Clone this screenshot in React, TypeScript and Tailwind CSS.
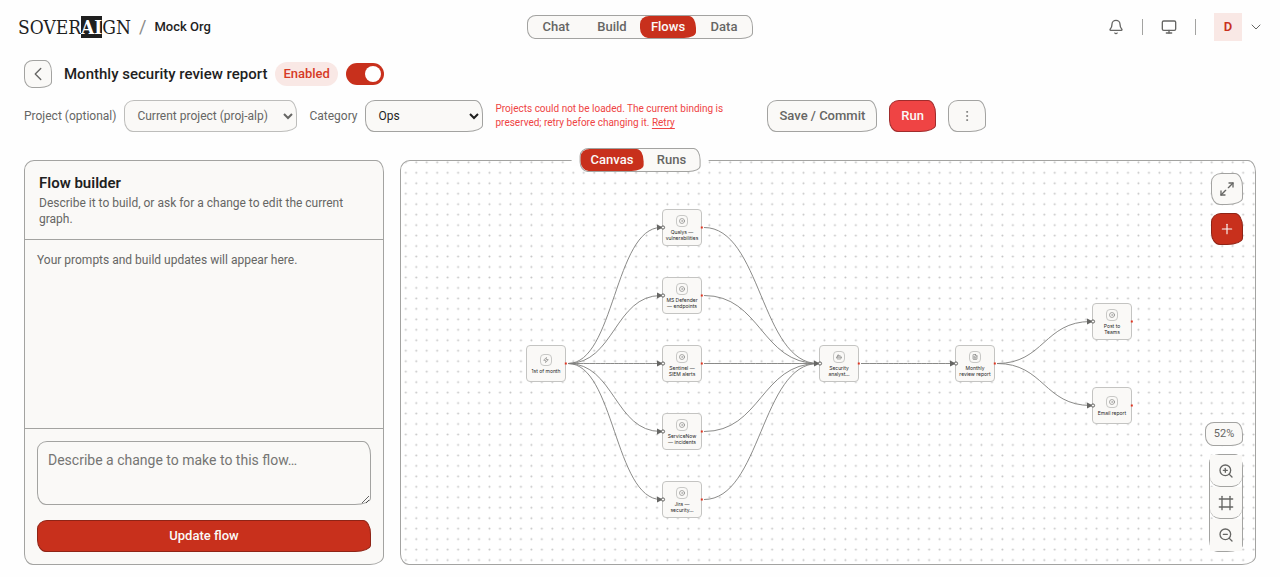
import { useState } from 'react';
import {
  Bell,
  Bot,
  ChevronDown,
  ChevronLeft,
  CircleDot,
  EllipsisVertical,
  FileText,
  Frame,
  Maximize2,
  Monitor,
  Plus,
  Zap,
  ZoomIn,
  ZoomOut,
} from 'lucide-react';
import type { LucideIcon } from 'lucide-react';
import clsx from 'clsx';

const WOBBLE = 'rounded-[10px_8px_16px_9px/9px_14px_7px_12px]';
const WOBBLE_SM = 'rounded-[9px_7px_12px_8px/8px_12px_6px_10px]';
const PANEL = 'rounded-[10px_8px_14px_9px/10px_12px_9px_11px]';

const NODE_W = 40;
const NODE_H = 37;

type FlowNode = { id: string; x: number; y: number; icon: LucideIcon; lines: string[] };

const nodes: FlowNode[] = [
  { id: 'start', x: 2, y: 138, icon: Zap, lines: ['1st of month'] },
  { id: 'qualys', x: 138, y: 2, icon: CircleDot, lines: ['Qualys —', 'vulnerabilities'] },
  { id: 'defender', x: 138, y: 70, icon: CircleDot, lines: ['MS Defender', '— endpoints'] },
  { id: 'sentinel', x: 138, y: 138, icon: CircleDot, lines: ['Sentinel —', 'SIEM alerts'] },
  { id: 'servicenow', x: 138, y: 206, icon: CircleDot, lines: ['ServiceNow', '— incidents'] },
  { id: 'jira', x: 138, y: 274, icon: CircleDot, lines: ['Jira —', 'security…'] },
  { id: 'analyst', x: 295, y: 138, icon: Bot, lines: ['Security', 'analyst…'] },
  { id: 'report', x: 431, y: 138, icon: FileText, lines: ['Monthly', 'review report'] },
  { id: 'teams', x: 568, y: 96, icon: CircleDot, lines: ['Post to', 'Teams'] },
  { id: 'email', x: 568, y: 180, icon: CircleDot, lines: ['Email report'] },
];

const edges: [string, string][] = [
  ['start', 'qualys'],
  ['start', 'defender'],
  ['start', 'sentinel'],
  ['start', 'servicenow'],
  ['start', 'jira'],
  ['qualys', 'analyst'],
  ['defender', 'analyst'],
  ['sentinel', 'analyst'],
  ['servicenow', 'analyst'],
  ['jira', 'analyst'],
  ['analyst', 'report'],
  ['report', 'teams'],
  ['report', 'email'],
];

const byId = Object.fromEntries(nodes.map((n) => [n.id, n]));

function edgePath([from, to]: [string, string]) {
  const sx = byId[from].x + NODE_W + 2;
  const sy = byId[from].y + NODE_H / 2;
  const tx = byId[to].x - 1;
  const ty = byId[to].y + NODE_H / 2;
  const mx = (sx + tx) / 2;
  return `M${sx} ${sy}C${mx} ${sy} ${mx} ${ty} ${tx} ${ty}`;
}

function Segmented({ label, items, active, onChange, itemClass }: {
  label: string;
  items: string[];
  active: string;
  onChange: (v: string) => void;
  itemClass: string;
}) {
  return (
    <nav aria-label={label} className={clsx('flex h-6 border border-[#a3a3a1] bg-[#faf9f7]', WOBBLE_SM)}>
      {items.map((item) => (
        <button
          key={item}
          type="button"
          onClick={() => onChange(item)}
          className={clsx(
            'flex items-center justify-center text-[13px] leading-4 font-medium',
            WOBBLE_SM,
            itemClass,
            item === active ? 'bg-[#c8301c] text-[#faf9f7]' : 'text-[#666664]',
          )}
        >
          {item}
        </button>
      ))}
    </nav>
  );
}

function Header() {
  const [section, setSection] = useState('Flows');
  return (
    <header className="grid h-[54px] grid-cols-[1fr_auto_1fr] items-center px-4">
      <div className="flex items-center pl-[2px]">
        <a href="#" className="font-['DejaVu_Serif_Condensed','DejaVu_Serif',serif] text-[19px] leading-5 text-[#1f1f1f]">
          SOVER<span className="bg-[#1f1f1f] font-bold text-white">AI</span>GN
        </a>
        <span className="ml-2 text-lg leading-5 text-[#8a8a88]">/</span>
        <span className="ml-2 text-[13px] leading-4 font-medium text-[#1f1f1f]">Mock Org</span>
      </div>
      <Segmented label="Sections" items={['Chat', 'Build', 'Flows', 'Data']} active={section} onChange={setSection} itemClass="w-14" />
      <div className="flex items-center justify-end text-[#666664]">
        <button type="button" aria-label="Notifications">
          <Bell className="h-4 w-4" strokeWidth={2} />
        </button>
        <span className="mx-[18px] h-4 w-px bg-[#a3a3a1]" />
        <button type="button" aria-label="Display">
          <Monitor className="h-4 w-4" strokeWidth={2} />
        </button>
        <span className="mx-[18px] h-4 w-px bg-[#a3a3a1]" />
        <button type="button" aria-label="Account" className="flex items-center gap-[6px]">
          <span className="flex h-7 w-7 items-center justify-center bg-[#f9e8e5] text-[13px] font-semibold text-[#c8301c]">D</span>
          <ChevronDown className="h-4 w-4" strokeWidth={1.5} />
        </button>
      </div>
    </header>
  );
}

function Toolbar() {
  const [enabled, setEnabled] = useState(true);
  return (
    <div className="px-6">
      <div className="mt-[6px] flex h-7 items-center">
        <button
          type="button"
          aria-label="Back to flows"
          className={clsx('flex h-7 w-7 items-center justify-center border border-[#a3a3a1] bg-[#faf9f7] text-[#666664]', WOBBLE_SM)}
        >
          <ChevronLeft className="h-[22px] w-[22px]" strokeWidth={1.5} />
        </button>
        <h1 className="ml-3 text-[15px] leading-5 font-medium text-[#1f1f1f]">Monthly security review report</h1>
        <span className="ml-2 flex h-6 items-center rounded-full bg-[#f9e8e5] px-2 text-[13px] font-medium text-[#d63a26]">Enabled</span>
        <label className="relative ml-2 block h-[22px] w-[38px]">
          <input
            type="checkbox"
            role="switch"
            aria-label="Enabled"
            checked={enabled}
            onChange={(e) => setEnabled(e.target.checked)}
            className="peer h-[22px] w-[38px] appearance-none rounded-full bg-[#a3a3a1] checked:bg-[#c8301c]"
          />
          <span className="pointer-events-none absolute top-[3px] left-[3px] h-4 w-4 rounded-full bg-white peer-checked:left-[19px]" />
        </label>
      </div>

      <div className="mt-3 flex items-center gap-3 text-xs leading-4">
        <div className="flex items-center gap-2">
          <label htmlFor="project" className="text-[#666664]">Project (optional)</label>
          <select
            id="project"
            disabled
            className={clsx('h-8 w-[173px] border border-[#bdbdbb] bg-[#faf9f7] pl-2 text-[#666664]', WOBBLE)}
          >
            <option>Current project (proj-alp)</option>
          </select>
        </div>
        <div className="flex items-center gap-2">
          <label htmlFor="category" className="text-[#666664]">Category</label>
          <select
            id="category"
            className={clsx('h-8 w-[118px] border border-[#a3a3a1] bg-[#faf9f7] pl-2 text-[#1f1f1f]', WOBBLE)}
          >
            <option>Ops</option>
          </select>
        </div>
        <p className="w-[260px] text-[10px] leading-[14px] text-[#ef4444]">
          Projects could not be loaded. The current binding is
          <br />
          preserved; retry before changing it. <a href="#" className="underline underline-offset-2">Retry</a>
        </p>
        <button
          type="button"
          className={clsx('h-8 border border-[#a3a3a1] bg-[#faf9f7] px-[11px] text-[13px] font-medium text-[#666664]', WOBBLE)}
        >
          Save / Commit
        </button>
        <button
          type="button"
          className={clsx('h-8 border border-[#a02c2c] bg-[#ef4444] px-[11px] text-[13px] font-medium text-[#faf9f7]', WOBBLE)}
        >
          Run
        </button>
        <button
          type="button"
          aria-label="More actions"
          className={clsx('flex h-8 w-[38px] items-center justify-center border border-[#a3a3a1] bg-[#faf9f7] text-[#666664]', WOBBLE)}
        >
          <EllipsisVertical className="h-[14px] w-[14px]" strokeWidth={1.2} />
        </button>
      </div>
    </div>
  );
}

function FlowBuilder() {
  return (
    <aside className={clsx('flex w-[360px] shrink-0 flex-col border border-[#a3a3a1] bg-[#faf9f7]', PANEL)}>
      <div className="border-b border-[#a3a3a1] px-[14px] pt-3 pb-3">
        <h2 className="text-[15px] leading-5 font-semibold text-[#1f1f1f]">Flow builder</h2>
        <p className="mt-[2px] max-w-[320px] text-xs leading-4 text-[#666664]">
          Describe it to build, or ask for a change to edit the current graph.
        </p>
      </div>
      <div className="flex-1 p-3 text-xs leading-4 text-[#666664]">Your prompts and build updates will appear here.</div>
      <form className="flex flex-col gap-[15px] border-t border-[#a3a3a1] p-3" onSubmit={(e) => e.preventDefault()}>
        <textarea
          aria-label="Describe a change"
          placeholder="Describe a change to make to this flow…"
          className={clsx('h-16 w-full border border-[#a3a3a1] bg-transparent px-[10px] py-2 text-sm leading-5 placeholder:text-[#757573]', WOBBLE)}
        />
        <button type="submit" className={clsx('h-8 border border-[#8f2416] bg-[#c8301c] text-[13px] leading-4 font-medium text-[#faf9f7]', WOBBLE)}>
          Update flow
        </button>
      </form>
    </aside>
  );
}

function NodeCard({ node }: { node: FlowNode }) {
  const Icon = node.icon;
  return (
    <div
      className="absolute flex h-[37px] w-10 flex-col items-center justify-center gap-[2px] rounded-[4px] border border-[#c4c4c2] bg-[#faf9f7]"
      style={{ left: node.x, top: node.y }}
    >
      <span className="flex h-3 w-3 items-center justify-center rounded-[4px] border border-[#c8c8c6] text-[#777775]">
        <Icon className="h-[6px] w-[6px]" strokeWidth={2.4} />
      </span>
      <span className="text-center font-[Inter,sans-serif] text-[5px] leading-[6px] whitespace-nowrap text-[#1f1f1f]">
        {node.lines.map((line) => (
          <span key={line} className="block">{line}</span>
        ))}
      </span>
    </div>
  );
}

function Graph() {
  return (
    <div className="relative h-[311px] w-[608px] shrink-0">
      {nodes.map((n) => (
        <NodeCard key={n.id} node={n} />
      ))}
      <svg className="pointer-events-none absolute inset-0 overflow-visible" width="608" height="311" aria-hidden="true">
        {edges.map((e) => (
          <path key={e.join()} d={edgePath(e)} fill="none" stroke="#7d7d7b" strokeWidth="0.9" />
        ))}
        {nodes.map((n) => {
          const cy = n.y + NODE_H / 2;
          return (
            <g key={n.id}>
              {n.id !== 'start' && (
                <>
                  <path d={`M${n.x - 5} ${cy - 3}L${n.x + 1} ${cy}L${n.x - 5} ${cy + 3}Z`} fill="#666664" />
                  <circle cx={n.x + 1} cy={cy} r="1.6" fill="#faf9f7" stroke="#555553" strokeWidth="0.9" />
                </>
              )}
              <rect x={n.x + NODE_W - 1.2} y={cy - 1} width="2" height="2" fill="#e03420" />
            </g>
          );
        })}
      </svg>
    </div>
  );
}

function Canvas() {
  const control = 'flex h-8 w-8 items-center justify-center';
  return (
    <section aria-label="Canvas" className={clsx('relative flex flex-1 items-center justify-center overflow-hidden border border-[#a3a3a1] bg-white', PANEL)}>
      <svg className="absolute inset-0 h-full w-full" aria-hidden="true">
        <defs>
          <pattern id="dots" x="-0.4" y="-3.9" width="10.467" height="10.467" patternUnits="userSpaceOnUse">
            <circle cx="5.2" cy="5.2" r="1" fill="#c4c4c4" />
          </pattern>
        </defs>
        <rect width="100%" height="100%" fill="url(#dots)" />
      </svg>
      <Graph />

      <div className="absolute top-3 right-3 flex flex-col gap-2">
        <button type="button" aria-label="Full screen" className={clsx(control, 'border border-[#a3a3a1] bg-[#faf9f7] text-[#666664]', WOBBLE)}>
          <Maximize2 className="h-4 w-4" strokeWidth={2} />
        </button>
        <button type="button" aria-label="Add node" className={clsx(control, 'border border-[#8f2416] bg-[#c8301c] text-[#faf9f7]', WOBBLE)}>
          <Plus className="h-4 w-4" strokeWidth={1.7} />
        </button>
      </div>

      <div className="absolute right-3 bottom-3 flex flex-col items-end gap-2 text-[#666664]">
        <span className={clsx('flex h-6 w-[38px] items-center justify-center border border-[#a3a3a1] bg-[#faf9f7] text-[11px]', WOBBLE_SM)}>52%</span>
        <div className={clsx('flex flex-col border border-[#a3a3a1]', WOBBLE)}>
          <button type="button" aria-label="Zoom in" className={clsx(control, 'rounded-b-[10px] border-b border-[#a3a3a1] bg-[#faf9f7]')}>
            <ZoomIn className="h-4 w-4" strokeWidth={2} />
          </button>
          <button type="button" aria-label="Fit view" className={clsx(control, 'rounded-b-[10px] border-b border-[#a3a3a1] bg-[#faf9f7]')}>
            <Frame className="h-4 w-4" strokeWidth={2} />
          </button>
          <button type="button" aria-label="Zoom out" className={clsx(control, 'bg-[#faf9f7]')}>
            <ZoomOut className="h-4 w-4" strokeWidth={2} />
          </button>
        </div>
      </div>
    </section>
  );
}

export default function App() {
  const [view, setView] = useState('Canvas');
  return (
    <div className="flex min-h-screen flex-col bg-[#fefefe] font-[Roboto,sans-serif]">
      <Header />
      <Toolbar />
      <main className="relative mt-7 flex flex-1 gap-4 px-6 pb-3">
        <FlowBuilder />
        <Canvas />
        <div className="absolute -top-3 left-1/2 flex -translate-x-1/2">
          <span className="absolute top-[10px] -right-2 -left-2 h-2 bg-[#fefefe]" />
          <div className="relative">
            <Segmented label="View" items={['Canvas', 'Runs']} active={view} onChange={setView} itemClass="min-w-14 px-[10px]" />
          </div>
        </div>
      </main>
    </div>
  );
}
